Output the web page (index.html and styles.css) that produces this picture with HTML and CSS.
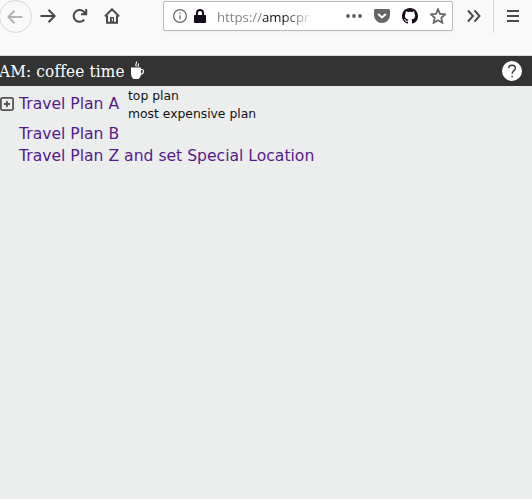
FILE: index.html
```html
<!DOCTYPE html>
<html lang="en">
<head>
<meta charset="utf-8">
<title>Coffee time</title>
<link rel="stylesheet" href="styles.css">
</head>
<body>
<nav class="toolbar">
  <button class="back" aria-label="Back"><svg width="16" height="16" viewBox="0 0 16 16"><path d="M15.5 8H1.5M7.5 1.8 1.3 8l6.2 6.2"/></svg></button>
  <button class="tool forward" aria-label="Forward"><svg width="16" height="16" viewBox="0 0 16 16"><path d="M.5 8h14M8.5 1.8 14.7 8l-6.2 6.2"/></svg></button>
  <button class="tool reload" aria-label="Reload"><svg width="16" height="16" viewBox="0 0 16 16"><path d="M12.2 11.6A5.900 5.900 0 1 1 11.500 3.500L14 6M14.200 1v5.300H9"/></svg></button>
  <button class="tool home" aria-label="Home"><svg width="16" height="16" viewBox="0 0 16 16"><path d="M.9 8.4 8 1.3l7.1 7.1M3 7.5v7.2h10V7.5"/><path class="solid" d="M6 9h4v6H6z"/><path class="hole" d="M7.8 10.2h1v3h-1z"/></svg></button>
  <div class="address">
    <svg class="info" width="14" height="14" viewBox="0 0 14 14"><circle cx="7" cy="7" r="6.4"/><path d="M7 6.2v4.4M7 3.2v1.5"/></svg>
    <svg class="lock" width="12" height="14" viewBox="0 0 12 14"><path class="shackle" d="M3 7V4a3 3 0 0 1 6 0v3"/><rect y="6" width="12" height="8" rx="1"/></svg>
    <span class="url"><span class="scheme">https://</span>ampcpn</span>
    <svg class="dots" width="16" height="4" viewBox="0 0 16 4"><circle cx="2" cy="2" r="1.9"/><circle cx="8" cy="2" r="1.9"/><circle cx="14" cy="2" r="1.9"/></svg>
    <svg class="pocket" width="16" height="14" viewBox="0 0 16 14"><path d="M1.5 0h13A1.5 1.5 0 0 1 16 1.5V6a8 8 0 0 1-16 0V1.5A1.5 1.5 0 0 1 1.5 0z"/><path class="chevron" d="m4.2 5 3.8 3.5L11.8 5"/></svg>
    <svg class="github" width="16" height="16" viewBox="0 0 16 16"><path d="M8 0C3.58 0 0 3.58 0 8c0 3.54 2.29 6.53 5.47 7.59.4.07.55-.17.55-.38 0-.19-.01-.82-.01-1.49-2.01.37-2.53-.49-2.69-.94-.09-.23-.48-.94-.82-1.13-.28-.15-.68-.52-.01-.53.63-.01 1.08.58 1.23.82.72 1.21 1.87.87 2.33.66.07-.52.28-.87.51-1.07-1.78-.2-3.64-.89-3.64-3.95 0-.87.31-1.59.82-2.15-.08-.2-.36-1.02.08-2.12 0 0 .67-.21 2.2.82.64-.18 1.32-.27 2-.27s1.36.09 2 .27c1.53-1.04 2.2-.82 2.2-.82.44 1.1.16 1.92.08 2.12.51.56.82 1.27.82 2.15 0 3.07-1.87 3.75-3.65 3.95.29.25.54.73.54 1.48 0 1.07-.01 1.93-.01 2.2 0 .21.15.46.55.38A8 8 0 0 0 16 8c0-4.42-3.58-8-8-8z"/></svg>
    <svg class="star" width="16" height="16" viewBox="0 0 16 16"><path d="m8 1.3 2 4.6 5 .5-3.7 3.4 1 4.9L8 12.2l-4.3 2.5 1-4.9L1 6.4l5-.5z"/></svg>
  </div>
  <button class="tool more" aria-label="More tools"><svg width="14" height="14" viewBox="0 0 14 14"><path d="m1 1.5 5 5.5-5 5.5M7.5 1.5l5 5.5-5 5.5"/></svg></button>
  <button class="tool menu" aria-label="Menu"><svg width="12" height="12" viewBox="0 0 12 12"><path d="M0 1h12M0 6h12M0 11h12"/></svg></button>
</nav>
<header class="titlebar">
  <h1>AM: coffee time</h1>
  <svg class="cup" width="15" height="19" viewBox="0 0 15 19"><path class="body" d="M1 6.500h10v6c0 2.500-1 4.500-2.500 5.500h-5C2 17 1 15 1 12.500z"/><path d="M11 8.500h1.200a1.700 1.700 0 0 1 1.300 1.700c0 2-1.300 3-3 3.300M6.500 5.500C4 3.500 7.500 2.800 6.300.5M8.500 5.500c-1-1 .3-1.800 0-3"/></svg>
  <button class="help" aria-label="Help"><svg width="20" height="20" viewBox="0 0 20 20"><circle cx="10" cy="10" r="10"/><path d="M6.700 7.200c0-4 6.700-4 6.700 0 0 2.500-3.300 2.700-3.300 5.500M10.100 14.800v1.400"/></svg></button>
</header>
<main class="plans">
  <div class="plan featured">
    <svg class="expand" width="14" height="14" viewBox="0 0 14 14"><rect x=".9" y=".9" width="12.200" height="12.200" rx="1.500"/><path d="M7 4v6M4 7h6"/></svg>
    <a class="name plan-a" href="#a">Travel Plan A</a>
    <div class="notes"><div>top plan</div><div>most expensive plan</div></div>
  </div>
  <div class="plan"><a class="name" href="#b">Travel Plan B</a></div>
  <div class="plan"><a class="name" href="#z">Travel Plan Z and set Special Location</a></div>
</main>
</body>
</html>
```
FILE: styles.css
```css
* { box-sizing: border-box; }
body { margin: 0; height: 499px; overflow: hidden; background: #eceeee; font-family: "DejaVu Sans", sans-serif; }
button { padding: 0; border: 0; background: none; display: flex; flex: none; color: #484848; }
svg { display: block; flex: none; fill: none; stroke: currentColor; stroke-width: 2; }
.toolbar { height: 56px; display: flex; align-items: flex-start; background: #f9f9f9; border-bottom: 1px solid #dcdedc; }
.back { width: 33px; height: 33px; margin-left: -1px; border: 1px solid #d5d5d5; border-radius: 50%; align-items: center; justify-content: center; color: #b2b2b2; }
.back svg { margin-left: -2px; }
.tool { margin-top: 8px; }
.forward { margin-left: 8px; }
.reload { margin-left: 16px; }
.home { margin-left: 16px; }
.solid { fill: currentColor; stroke: none; }
.hole { fill: #f9f9f9; stroke: none; }
.address { width: 290px; height: 30px; margin: 1px 0 0 43px; border: 1px solid #bababa; border-radius: 2px; background: #fff; display: flex; align-items: center; padding-left: 9px; box-shadow: 0 1px 3px #0000000c; color: #666; }
.info { stroke-width: 1.2; }
.lock { margin-left: 7px; fill: #150a18; stroke: none; }
.lock .shackle { fill: none; stroke: #150a18; stroke-width: 2; }
.url { width: 96px; margin: 2px 0 0 11px; white-space: nowrap; font: 13.200px/20px "Open Sans", sans-serif; color: #111; mask-image: linear-gradient(90deg, #000 66px, transparent 95px); }
.scheme { color: #858585; }
.dots { margin-left: 33px; fill: #606068; stroke: none; }
.pocket { margin-left: 12px; fill: #666; stroke: none; }
.chevron { fill: none; stroke: #fff; stroke-width: 2; }
.github { margin-left: 12px; fill: #180a18; stroke: none; }
.star { margin-left: 12px; stroke-width: 1.8; }
.more { margin: 9px 0 0 14px; }
.more svg { stroke-width: 1.900; }
.menu { height: 33px; margin: 0 0 0 12px; padding: 10px 0 0 13px; border-left: 1px solid #d8d8d8; }
.titlebar { height: 30px; display: flex; align-items: center; background: #333; color: #fff; }
h1 { width: 127px; margin: 0 0 0 -1px; white-space: nowrap; font: 400 17px/28px "DejaVu Serif Condensed", "DejaVu Serif", serif; letter-spacing: .15px; }
.cup { margin: -2px 0 0 4px; stroke-width: 1.100; }
.body { fill: #fff; stroke: none; }
.help { margin-left: auto; margin-right: 10px; color: #333; }
.help svg { stroke-width: 1.400; }
.help circle { fill: #fff; stroke: none; }
.plan { height: 22px; padding-left: 19px; display: flex; align-items: center; white-space: nowrap; }
.featured { height: 36px; margin-bottom: 1px; padding-left: 0; }
.expand { color: #555; stroke-width: 1.800; }
.name { font-size: 15.600px; line-height: 22px; color: #551a8b; text-decoration: none; }
.plan-a { width: 101px; margin-left: 5px; }
.notes { margin: 2px 0 0 8px; font-size: 12.350px; line-height: 18px; color: #111; }
```
